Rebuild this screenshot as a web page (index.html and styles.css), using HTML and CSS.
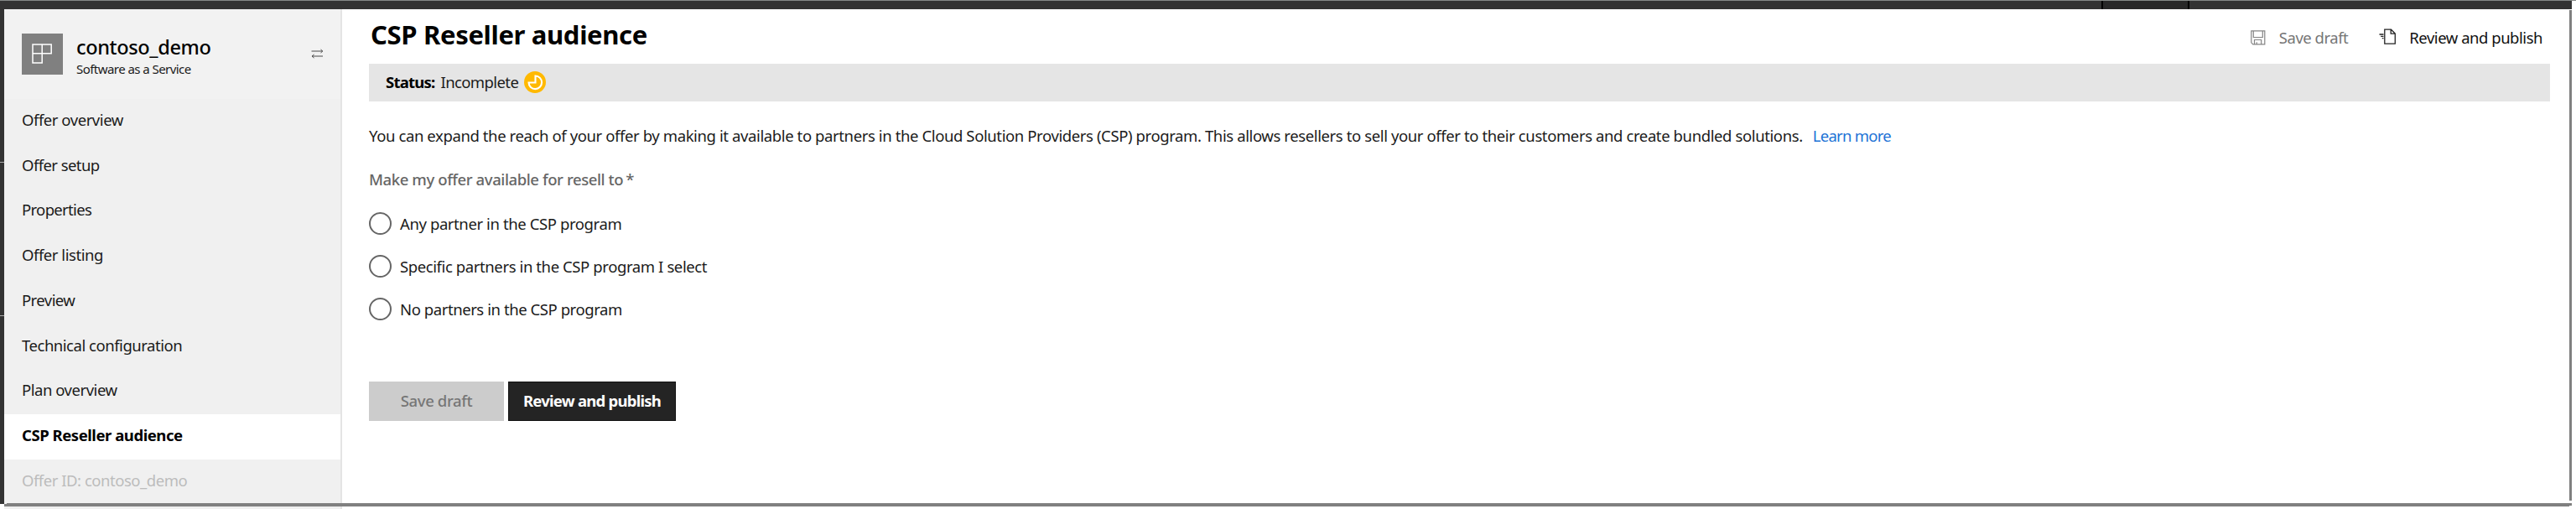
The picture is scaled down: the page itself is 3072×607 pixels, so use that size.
FILE: index.html
```html
<!DOCTYPE html>
<html lang="en">
<head>
<meta charset="utf-8">
<title>CSP Reseller audience</title>
<link rel="stylesheet" href="styles.css">
</head>
<body>
<div class="topbar"><span class="topbar-active"></span></div>
<div class="shell">
  <div class="rail"><i class="tick tick-a"></i><i class="tick tick-b"></i></div>
  <aside class="sidebar">
    <header class="offer">
      <div class="offer-logo">
        <svg width="49" height="49" viewBox="0 0 49 49" fill="none" stroke="#fff" stroke-width="1.5"><path d="M13 13H35.2V23.8H24.2V35H13ZM24.2 13V23.8H13"/></svg>
      </div>
      <div class="offer-text">
        <div class="offer-name">contoso_demo</div>
        <div class="offer-type">Software as a Service</div>
      </div>
      <svg class="swap" width="15" height="12" viewBox="0 0 15 12" fill="none" stroke="#4a4a4a" stroke-width="1"><path d="M.5 3H13.5M11.5 1 13.8 3 11.5 5M14 9H1.5M3.5 7 1 9 3.5 11"/></svg>
    </header>
    <nav class="nav">
      <a class="s47">Offer overview</a>
      <a class="s57">Offer setup</a>
      <a class="s67">Properties</a>
      <a class="s47">Offer listing</a>
      <a class="s57">Preview</a>
      <a class="s50">Technical configuration</a>
      <a class="s50">Plan overview</a>
      <a class="active s47">CSP Reseller audience</a>
      <a class="muted s50">Offer ID: contoso_demo</a>
    </nav>
  </aside>
  <main class="main">
    <div class="heading">
      <h1>CSP Reseller audience</h1>
      <div class="actions">
        <svg class="save-icon" width="18" height="18" viewBox="0 0 18 18" fill="none" stroke="#858585" stroke-width="1.2"><path d="M.8.8H16.8V16.8H2.8L.8 14.8ZM3.3.8V8.5H14.3V.8M4.5 16.8V11.5H12.7V16.8M7.2 16.8V14.2"/></svg>
        <span class="action-save">Save draft</span>
        <svg class="publish-icon" width="21" height="20" viewBox="0 0 21 20" fill="none" stroke="#222" stroke-width="1.3"><path d="M6.8 1.2H14.5L19.3 6V18.2H6.8ZM14.2 1.2V6.2H19.3"/><path d="M.5 7H5.5M2.2 9.3H5.5M3.8 11.6H5.5"/></svg>
        <span class="action-publish">Review and publish</span>
      </div>
    </div>
    <div class="status">
      <b>Status:</b><span class="status-value">Incomplete</span>
      <svg width="26" height="26" viewBox="0 0 26 26"><circle cx="13" cy="13" r="13" fill="#ffb900"/><path d="M13.5 5.5A7.8 7.8 0 1 1 5.5 13.5H13.5Z" fill="none" stroke="#fff" stroke-width="2.1"/></svg>
    </div>
    <p class="intro"><span>You can expand the reach of your offer by making it available to partners in the Cloud Solution Providers (CSP) program. This allows resellers to sell your offer to their customers and create bundled solutions.</span><a class="learn">Learn more</a></p>
    <div class="question"><span>Make my offer available for resell to</span><span class="star">*</span></div>
    <div class="choices">
      <label><i></i><span class="c1">Any partner in the CSP program</span></label>
      <label><i></i><span class="c2">Specific partners in the CSP program I select</span></label>
      <label><i></i><span class="c3">No partners in the CSP program</span></label>
    </div>
    <div class="buttons">
      <button class="btn-save">Save draft</button>
      <button class="btn-publish">Review and publish</button>
    </div>
  </main>
</div>
<div class="frame-right"></div>
<div class="frame-bottom"></div>
</body>
</html>
```
FILE: styles.css
```css
*{box-sizing:border-box}
html,body{height:100%}
body{margin:0;position:relative;background:#fff;overflow:hidden;font:18.5px/26px "Noto Sans","Open Sans",sans-serif;color:#1b1b1b;white-space:nowrap}
.topbar{height:11px;width:3067px;background:#333;border-top:1px solid #858987;box-shadow:5px -10px 0 #858987;padding-left:2506px}
.topbar-active{display:block;width:105px;height:10px;background:#282828;border:solid #000;border-width:0 2px}
.shell{display:flex;height:596px}
.rail{width:5px;height:590px;background:#333;position:relative;flex:none}
.tick{position:absolute;left:0;width:5px;height:1px;background:#aaa}
.tick-a{top:182px}
.tick-b{top:365px}
.sidebar{width:403px;flex:none;background:#f0f0f0;border-right:2px solid #e4e4e4}
.offer{height:106.5px;background:#f2f2f2;display:flex;padding:29px 20px 0 21px}
.offer-logo{width:49px;height:49px;background:#808080}
.offer-logo svg{display:block}
.offer-text{margin:-1px 0 0 16px;flex:1}
.offer-name{font-size:23.5px;line-height:34px;font-weight:500;letter-spacing:-.35px;color:#000}
.offer-type{font-size:15px;line-height:18px;letter-spacing:-.55px}
.swap{margin-top:18px}
.nav{display:flex;flex-direction:column}
.nav a{height:53.75px;padding:0 0 3px 21px;display:flex;align-items:center}
.nav .active{background:#fff;font-weight:700;color:#000}
.nav .muted{color:#bcbcbc}
.s47{letter-spacing:-.45px}
.s50{letter-spacing:-.47px}
.s57{letter-spacing:-.57px}
.s67{letter-spacing:-.67px}
.main{flex:1;padding:0 31px 0 32px}
.heading{height:64.5px;display:flex;justify-content:space-between}
h1{margin:9px 0 0 2px;font-size:31px;line-height:42px;letter-spacing:-.33px;color:#000}
.actions{display:flex;align-items:center;height:26px;margin:21px 9px 0 0}
.action-save{margin:0 37px 0 16px;color:#767676;letter-spacing:-.48px}
.action-publish{margin-left:15px;color:#111;letter-spacing:-.47px}
.publish-icon{margin-top:-2px}
.status{height:45.5px;background:#e5e5e5;display:flex;align-items:center;padding:0 0 0 20px}
.status b{letter-spacing:-.77px;color:#000}
.status-value{letter-spacing:-.6px;margin:0 7px}
.intro{margin:28px 0 0;letter-spacing:-.392px}
.learn{color:#2173d6;letter-spacing:-.73px;margin-left:12px}
.question{margin-top:26px;color:#666;font-weight:500;letter-spacing:-.4px}
.star{margin-left:3px}
.choices{margin-top:26px}
.choices label{display:flex;align-items:center;height:27px;margin-bottom:24px}
.choices i{width:27px;height:27px;border:2px solid #666;border-radius:50%;margin-right:10px}
.choices span{padding-top:1px}
.c1{letter-spacing:-.4px}
.c2{letter-spacing:-.4px}
.c3{letter-spacing:-.43px}
.buttons{display:flex;gap:5px;margin-top:72.5px}
.buttons button{height:47px;border:0;padding:0;font-family:inherit;font-size:18.5px;line-height:26px}
.btn-save{width:161px;background:#ccc;color:#767676;font-weight:500;letter-spacing:-.35px}
.buttons .btn-publish{width:200px;background:#242424;color:#fff;font-weight:700;letter-spacing:-.75px;border:1px solid #111}
/* window outline drawn over the page edges */
.frame-right{position:absolute;left:3064px;top:12px;width:3px;height:585px;background:#808080}
.frame-bottom{position:absolute;left:8px;top:600px;width:3059px;height:3px;background:#808080;box-shadow:-3px 1px 0 #808080}
```
